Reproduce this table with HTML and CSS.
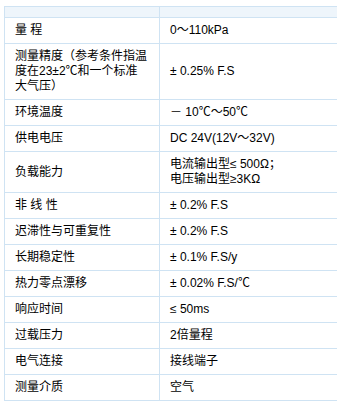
FILE: index.html
```html
<!DOCTYPE html>
<html lang="zh">
<head>
<meta charset="utf-8">
<link rel="stylesheet" href="styles.css">
</head>
<body>
<div class="wrap">
<table class="spec">
<colgroup><col class="c1"><col class="c2"></colgroup>
<tr class="head"><td></td><td></td></tr>
<tr><td>量 程</td><td>0～110kPa</td></tr>
<tr><td>测量精度（参考条件指温度在23±2℃和一个标准大气压）</td><td>± 0.25% F.S</td></tr>
<tr><td>环境温度</td><td>－ 10℃～50℃</td></tr>
<tr><td>供电电压</td><td>DC 24V(12V～32V)</td></tr>
<tr><td>负载能力</td><td>电流输出型≤ 500Ω；<br>电压输出型≥3KΩ</td></tr>
<tr><td>非 线 性</td><td>± 0.2% F.S</td></tr>
<tr><td>迟滞性与可重复性</td><td>± 0.2% F.S</td></tr>
<tr><td>长期稳定性</td><td>± 0.1% F.S/y</td></tr>
<tr><td>热力零点漂移</td><td>± 0.02% F.S/℃</td></tr>
<tr><td>响应时间</td><td>≤ 50ms</td></tr>
<tr><td>过载压力</td><td>2倍量程</td></tr>
<tr><td>电气连接</td><td>接线端子</td></tr>
<tr><td>测量介质</td><td>空气</td></tr>
</table>
</div>
</body>
</html>
```
FILE: styles.css
```css
html, body {
  margin: 0;
  padding: 0;
  background: #fff;
}
.wrap {
  padding: 6px 0 0 4px;
  width: 333px;
  overflow: hidden;
}
.spec {
  border-collapse: collapse;
  width: 340px;
  table-layout: fixed;
  font-family: "Liberation Sans", "Noto Sans CJK SC", sans-serif;
  font-size: 12px;
  line-height: 15px;
  color: #000;
}
.spec col.c1 {
  width: 155px;
}
.spec td {
  border: 1px solid #cfe3f3;
  padding: 5px 10px;
  vertical-align: middle;
}
.spec tr.head td {
  background: #eef5fb;
  height: 10px;
  padding-top: 0;
  padding-bottom: 0;
  line-height: 10px;
}
```
